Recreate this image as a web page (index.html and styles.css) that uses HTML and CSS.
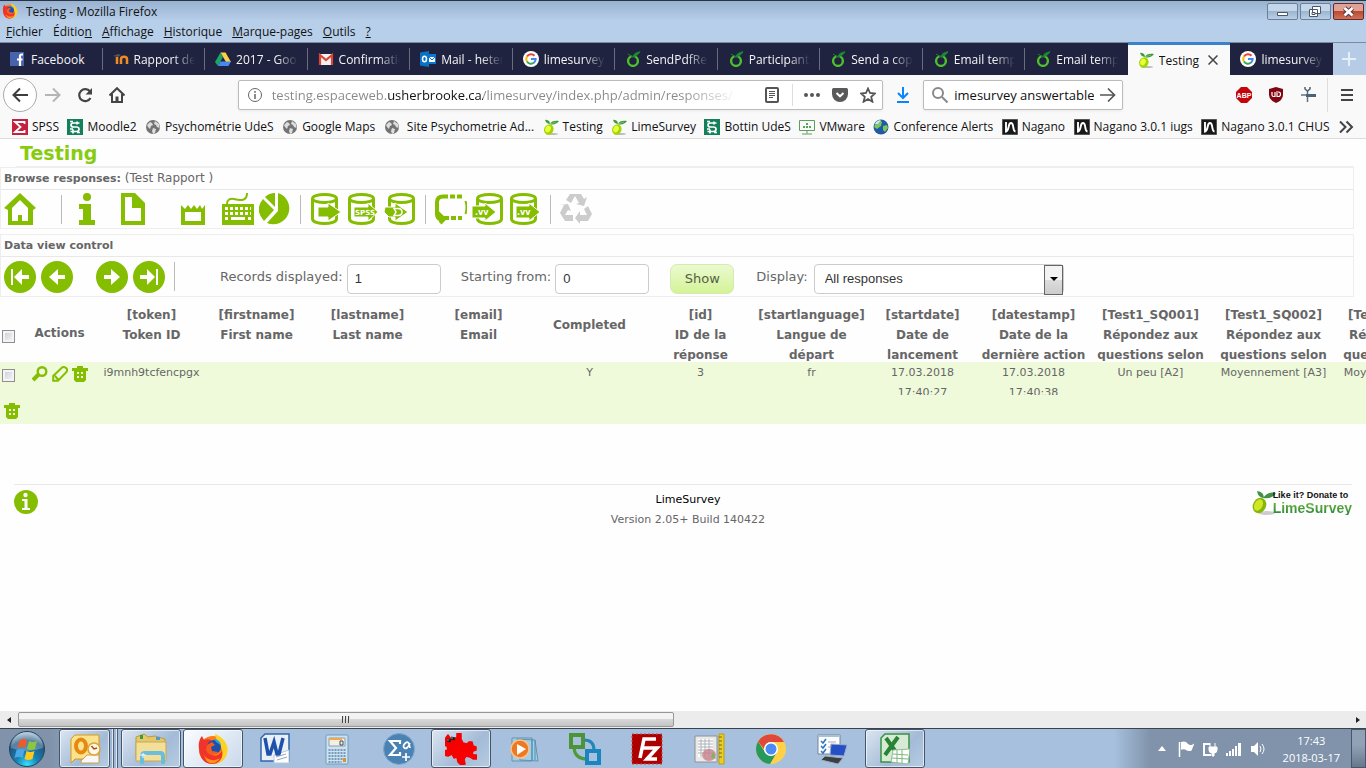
FILE: index.html
```html
<!DOCTYPE html>
<html lang="fr">
<head>
    <meta charset="UTF-8">
    <meta name="viewport" content="width=device-width, initial-scale=1.0">
    <title>Testing - Mozilla Firefox</title>
    <link rel="stylesheet" href="styles.css">
</head>
<body>
    <!-- Shared icons -->
    <svg class="defs" aria-hidden="true">
        <symbol id="firefox" viewBox="0 0 32 32">
            <circle cx="16" cy="17" r="14" fill="#ff7a18"/>
            <path d="M18 1c5 2 11 6 12.500 14 1 9-6 16-14.500 16 7-3 10-8 9-14-.5-5-6-8-7-16z" fill="#ffd21f"/>
            <path d="M2 16C1 10 3 5 5 3l2 4c3-1 6-1 8 1l-4 4c-1 4 0 8 4 10 5 2 9-1 10-5 2 8-3 14-10 14C8 31 3 26 2 16z" fill="#f0342c"/>
            <path d="M7 22c3 5 10 7 16 3-2 4-6 6-10 5-3-1-5-4-6-8z" fill="#ff9416"/>
            <circle cx="17" cy="14" r="7" fill="#1f4fae"/>
            <path d="M10 12l5-3 3 3-4 2 1 4 6 1c-2 4-10 4-12-2z" fill="#f65b1e"/>
            <path d="M17 6c4 0 7 3 7 7-2-3-5-3-7-7z" fill="#28a3e0"/>
        </symbol>
        <symbol id="google" viewBox="0 0 16 16">
            <circle cx="8" cy="8" r="8" fill="#fff"/>
            <g fill="none" stroke-width="2">
                <path d="M11.500 4.700A4.700 4.700 0 0 0 4 5.600" stroke="#ea4335"/>
                <path d="M4 5.500a4.700 4.700 0 0 0 0 5" stroke="#fbbc05"/>
                <path d="M4 10.500a4.700 4.700 0 0 0 7 1.100" stroke="#34a853"/>
                <path d="M8 8h4.700a4.700 4.700 0 0 1-1.700 3.700" stroke="#4285f4"/>
            </g>
        </symbol>
        <symbol id="limeRing" viewBox="0 0 16 16">
            <circle cx="8" cy="10" r="4.900" fill="none" stroke="#4fc02c" stroke-width="2.400"/>
            <path d="M6.500 5h3" stroke="#20233f" stroke-width="3"/>
            <path d="M3 3l4 2.500M7.500 6C8.500 3 11 1.500 15 .8 13.500 3.500 10.500 5.500 7.500 6z" fill="#1c8a33" stroke="#1c8a33"/>
        </symbol>
        <symbol id="lime" viewBox="0 0 16 16">
            <ellipse cx="9" cy="15" rx="6" ry="1" fill="#bbb"/>
            <ellipse cx="5.800" cy="10.500" rx="4.600" ry="5.300" transform="rotate(28 5.800 10.500)" fill="#a2d600"/>
            <ellipse cx="5" cy="10" rx="2.600" ry="3.500" transform="rotate(28 5 10)" fill="#eaff3c"/>
            <path d="M7 5C8 2 12 1 16 2c-2 3-6 4.500-9 3zM7 5C4 5 2.500 3 2 .8 5 .8 7 2 7 5z" fill="#3f9b3a"/>
            <path d="M7 5l6-2" stroke="#a5dc91" stroke-width=".5"/>
        </symbol>
        <symbol id="globe" viewBox="0 0 16 16">
            <circle cx="8" cy="8" r="7" fill="#737373"/>
            <path d="M2 6l3-3 2 1 1 2-2 1-1 3-2-2zM10 2l4 3 .5 4-2.500-1-1-2-2-1zM8 9l3 1-1 4-2 1-1-3z" fill="#ddd"/>
        </symbol>
        <symbol id="udes" viewBox="0 0 16 16">
            <path d="M0 0h16v16H0z" fill="#14805b"/>
            <path d="M12.500 4H6.500Q4 4 4 6t2.500 2h3Q12 8 12 10.200T9.500 12.500H3.500M3 2.500h3M10 2.500v3M6 10.500v4M3 10h3M10 13.500h3" fill="none" stroke="#fff" stroke-width="1.700"/>
        </symbol>
        <symbol id="nagano" viewBox="0 0 16 16">
            <path d="M.5.5h15v15H.5z" fill="#191919" stroke="#555"/>
            <path d="M4 3v9.500C8 11 5.500 4 9 4s1 8 4.500 8.500" fill="none" stroke="#fff" stroke-width="1.900"/>
        </symbol>
        <symbol id="cylinder" viewBox="0 0 32 32">
            <path d="M2.500 6v20c0 6 24 6 24 0V6" fill="none" stroke="#85bd00" stroke-width="3"/>
            <ellipse cx="14.500" cy="5.500" rx="12" ry="4" fill="none" stroke="#85bd00" stroke-width="3"/>
        </symbol>
        <symbol id="trash" viewBox="0 0 16 16">
            <path d="M0 2h5V0h6v2h5v3h-2v9l-2 2H4l-2-2V5H0z" fill="#85bd00"/>
            <path d="M5 6h2v2H5zM9 6h2v2H9zM5 10h2v2H5zM9 10h2v2H9z" fill="#effadb"/>
        </symbol>
        <symbol id="arrow" viewBox="0 0 32 32">
            <circle cx="16" cy="16" r="16" fill="#85bd00"/>
            <path d="M24 14v4h-7v6l-9-8 9-8v6z" fill="#fff"/>
        </symbol>
        <symbol id="arrowEnd" viewBox="0 0 32 32">
            <circle cx="16" cy="16" r="16" fill="#85bd00"/>
            <path d="M25 14v4h-7v6l-8-8 8-8v6zM7 8h2v16H7z" fill="#fff"/>
        </symbol>
    </svg>

    <header class="chrome">
        <div class="titlebar">
            <svg class="i16"><use href="#firefox"/></svg>
            <span class="window-title">Testing - Mozilla Firefox</span>
            <div class="window-buttons">
                <button aria-label="Réduire"><svg viewBox="0 0 31 17"><path d="M10.500 9.500h10v3h-10z" fill="#fff" stroke="#4b5768"/></svg></button>
                <button aria-label="Restaurer"><svg viewBox="0 0 31 17"><g fill="#fff" stroke="#4b5768"><path d="M12.500 3.500h8v7h-8zM9.500 6.500h8v7h-8z"/><path d="M12 9.500h3v2h-3z"/></g></svg></button>
                <button class="close" aria-label="Fermer"><svg viewBox="0 0 31 17"><path d="M11.500 5l8 7.500M19.500 5l-8 7.500" stroke="#55303a" stroke-width="4.500"/><path d="M11.500 5l8 7.500M19.500 5l-8 7.500" stroke="#fff" stroke-width="2.800"/></svg></button>
            </div>
        </div>
        <nav class="menubar">
            <a href="#"><u>F</u>ichier</a>
            <a href="#">Éditio<u>n</u></a>
            <a href="#"><u>A</u>ffichage</a>
            <a href="#"><u>H</u>istorique</a>
            <a href="#"><u>M</u>arque-pages</a>
            <a href="#"><u>O</u>utils</a>
            <a href="#"><u>?</u></a>
        </nav>
        <div class="tabs">
            <a class="tab" href="#"><svg class="i16" viewBox="0 0 16 16"><path d="M0 1h14v14H0z" fill="#4763ab"/><path d="M13 3.500h-1.500Q10 3.500 10 5.500V15M7 8.500h5.500" fill="none" stroke="#fff" stroke-width="2.200"/></svg><span>Facebook</span></a>
            <a class="tab" href="#"><svg class="i16" viewBox="0 0 16 16"><path d="M4 13V6M8 13V8c0-3 6-3 6 0v5" fill="none" stroke="#f08a24" stroke-width="2.500"/><path d="M0 5l5-2 3 1-3 2z" fill="#555"/></svg><span>Rapport de</span></a>
            <a class="tab" href="#"><svg class="i16" viewBox="0 0 16 16"><path d="M5.500 1.500h5L16 11h-5z" fill="#ffcf48"/><path d="M5.500 1.500L8 6l-5 9-3-4z" fill="#1da462"/><path d="M5.500 10.500H16L13.500 15H3z" fill="#4688f4"/></svg><span>2017 - Goog</span></a>
            <a class="tab" href="#"><svg class="i16" viewBox="0 0 16 16"><path d="M1 3h14v11H1z" fill="#f1f1f1"/><path d="M2 14V4l6 5 6-5v10" fill="none" stroke="#db4437" stroke-width="2.200"/></svg><span>Confirmatio</span></a>
            <a class="tab" href="#"><svg class="i16" viewBox="0 0 16 16"><path d="M8 3h8v10H8z" fill="#0a78d4"/><path d="M9 6h6v5H9z" fill="#fff"/><path d="M9 6l3 3 3-3" fill="none" stroke="#0a78d4"/><path d="M0 1.500L9 0v16l-9-1.500z" fill="#0872c6"/><ellipse cx="4.500" cy="8" rx="2" ry="2.800" fill="none" stroke="#fff" stroke-width="1.500"/></svg><span>Mail - heter</span></a>
            <a class="tab" href="#"><svg class="i16"><use href="#google"/></svg><span>limesurvey</span></a>
            <a class="tab" href="#"><svg class="i16"><use href="#limeRing"/></svg><span>SendPdfRep</span></a>
            <a class="tab" href="#"><svg class="i16"><use href="#limeRing"/></svg><span>Participant</span></a>
            <a class="tab" href="#"><svg class="i16"><use href="#limeRing"/></svg><span>Send a copy</span></a>
            <a class="tab" href="#"><svg class="i16"><use href="#limeRing"/></svg><span>Email temp</span></a>
            <a class="tab" href="#"><svg class="i16"><use href="#limeRing"/></svg><span>Email temp</span></a>
            <a class="tab active" href="#"><svg class="i16"><use href="#lime"/></svg><span>Testing</span><svg class="tab-close" viewBox="0 0 10 10"><path d="M.5.5l9 9M9.500.5l-9 9" stroke="#444" stroke-width="1.500"/></svg></a>
            <a class="tab" href="#"><svg class="i16"><use href="#google"/></svg><span>limesurvey</span></a>
            <button class="new-tab" aria-label="Nouvel onglet"><svg viewBox="0 0 14 14"><path d="M7 0v14M0 7h14" stroke="#e6eef7" stroke-width="2"/></svg></button>
        </div>
        <div class="navbar">
            <button class="back" aria-label="Reculer"><svg class="i16" viewBox="0 0 16 16"><path d="M16 8H1.500M8 1.500L1.500 8 8 14.500" fill="none" stroke="#3d3d3d" stroke-width="2"/></svg></button>
            <button aria-label="Avancer"><svg class="i16" viewBox="0 0 16 16"><path d="M0 8h14.500M8 1.500L14.500 8 8 14.500" fill="none" stroke="#b5b5b5" stroke-width="2"/></svg></button>
            <button aria-label="Actualiser"><svg class="i16" viewBox="0 0 16 16"><path d="M13 4.500A6 6 0 1 0 13.500 11" fill="none" stroke="#444" stroke-width="2.200"/><path d="M15 1v6.500H8.500z" fill="#444"/></svg></button>
            <button aria-label="Accueil"><svg class="i16" viewBox="0 0 16 16"><path d="M.5 8.500L8 1.200l7.500 7.300M3 7v8h10V7" fill="none" stroke="#444" stroke-width="2"/><path d="M6.500 9.500h3V15h-3z" fill="#444"/></svg></button>
            <div class="spacer"></div>
            <div class="urlbar">
                <svg class="i16" viewBox="0 0 16 16"><circle cx="8" cy="8" r="6.500" fill="none" stroke="#666"/><path d="M8 7v5M8 4v1.700" stroke="#666" stroke-width="1.500"/></svg>
                <input class="url" type="text" aria-label="Adresse" value="testing.espaceweb.usherbrooke.ca/limesurvey/index.php/admin/responses/">
                <button aria-label="Mode lecture"><svg class="i16" viewBox="0 0 16 16"><rect x="2" y="1" width="12" height="14" rx="1" fill="none" stroke="#555" stroke-width="2"/><path d="M5 4.500h6M5 6.500h6M5 8.500h6M5 10.500h4" stroke="#555"/></svg></button>
                <i class="rule"></i>
                <button aria-label="Actions"><svg class="i16" viewBox="0 0 16 16"><g fill="#555"><circle cx="2" cy="8" r="2"/><circle cx="8" cy="8" r="2"/><circle cx="14" cy="8" r="2"/></g></svg></button>
                <button aria-label="Pocket"><svg class="i16" viewBox="0 0 16 16"><path d="M1.500 1h13Q16 1 16 3v4a8 8 0 0 1-16 0V3Q0 1 1.500 1z" fill="#5a5a5a"/><path d="M4.500 6L8 9.300 11.500 6" fill="none" stroke="#fff" stroke-width="2"/></svg></button>
                <button aria-label="Marquer cette page"><svg class="i16" viewBox="0 0 16 16"><path d="M8 1.500l2 4.500 5 .5-3.800 3.300 1.200 4.900L8 12l-4.400 2.700 1.200-4.900L1 6.500 6 6z" fill="none" stroke="#555" stroke-width="1.800"/></svg></button>
            </div>
            <button aria-label="Téléchargements"><svg class="i16" viewBox="0 0 16 16"><path d="M8 0v10M3 6l5 5 5-5M2 15h12" fill="none" stroke="#0a84ff" stroke-width="2"/></svg></button>
            <div class="searchbar">
                <svg class="i16" viewBox="0 0 16 16"><circle cx="6" cy="6" r="5" fill="none" stroke="#888" stroke-width="2"/><path d="M10 10l5.500 5.500" stroke="#888" stroke-width="2"/></svg>
                <input type="text" aria-label="Recherche" value="imesurvey answertable">
                <button aria-label="Rechercher"><svg class="i16" viewBox="0 0 16 16"><path d="M0 8h14.500M8 1.500L14.500 8 8 14.500" fill="none" stroke="#555" stroke-width="1.700"/></svg></button>
            </div>
            <div class="spacer"></div>
            <button aria-label="Adblock Plus"><svg class="i16" viewBox="0 0 16 16"><path d="M5 0h6l5 5v6l-5 5H5l-5-5V5z" fill="#c4060c"/><text x="8" y="10.500" class="abp">ABP</text></svg></button>
            <button aria-label="uBlock"><svg class="i16" viewBox="0 0 16 16"><path d="M8 0l7 2v6q0 5-7 8Q1 13 1 8V2z" fill="#800610"/><path d="M4 5v3q0 1.500 1.500 1.500H7V5M8 5h2.500q2 0 2 2.200t-2 2.300H9V6" fill="none" stroke="#fff" stroke-width="1.200"/></svg></button>
            <button aria-label="Extension"><svg class="i16" viewBox="0 0 16 16"><path d="M7.500 4v11M1 8h5" stroke="#5b7385" stroke-width="1.500"/><path d="M6 8.500h10" stroke="#4b6375" stroke-width="3"/><path d="M5 0v2l2.500 2L10 2V0" fill="none" stroke="#4b6375" stroke-width="1.500"/></svg></button>
            <i class="rule"></i>
            <button aria-label="Menu"><svg class="i16" viewBox="0 0 16 16"><path d="M2 3h12M2 8h12M2 13h12" stroke="#444" stroke-width="2"/></svg></button>
        </div>
        <nav class="bookmarks">
            <a href="#"><svg class="i16" viewBox="0 0 16 16"><path d="M0 0h16v16H0z" fill="#c5203e"/><path d="M12.500 5V3H3l5.500 5L3 13h9.500v-2" fill="none" stroke="#fff" stroke-width="1.800"/></svg>SPSS</a>
            <a href="#"><svg class="i16"><use href="#udes"/></svg>Moodle2</a>
            <a href="#"><svg class="i16"><use href="#globe"/></svg>Psychométrie UdeS</a>
            <a href="#"><svg class="i16"><use href="#globe"/></svg>Google Maps</a>
            <a href="#"><svg class="i16"><use href="#globe"/></svg>&nbsp;Site Psychometrie Ad...</a>
            <a href="#"><svg class="i16"><use href="#lime"/></svg>Testing</a>
            <a href="#"><svg class="i16"><use href="#lime"/></svg>LimeSurvey</a>
            <a href="#"><svg class="i16"><use href="#udes"/></svg>Bottin UdeS</a>
            <a href="#"><svg class="i16" viewBox="0 0 16 16"><path d="M.5 1.500h15v10H.5zM8 11.500v3M3 15h10" fill="none" stroke="#5aa05a"/><path d="M7 4h2v2H7zM4 7h2v2H4zM7 7h2v2H7zM10 7h2v2h-2z" fill="#5aa05a"/></svg>VMware</a>
            <a href="#"><svg class="i16" viewBox="0 0 16 16"><circle cx="8" cy="8" r="7.500" fill="#2159a8"/><path d="M3 3q4-3 6 0L8 7l-4 3-3-2zM10 7l4-1 1 3-3 4-2-2z" fill="#7ec657"/><path d="M2 5q2-4 6-4l-3 4z" fill="#cbe9f5"/></svg>Conference Alerts</a>
            <a href="#"><svg class="i16"><use href="#nagano"/></svg>Nagano</a>
            <a href="#"><svg class="i16"><use href="#nagano"/></svg>Nagano 3.0.1 iugs</a>
            <a href="#"><svg class="i16"><use href="#nagano"/></svg>Nagano 3.0.1 CHUS</a>
            <button aria-label="Plus de marque-pages"><svg class="i16" viewBox="0 0 16 16"><path d="M2 2.500L7.500 8 2 13.500M8.500 2.500L14 8l-5.500 5.500" fill="none" stroke="#444" stroke-width="2"/></svg></button>
        </nav>
    </header>

    <main class="page">
        <h1>Testing</h1>
        <section class="panel">
            <div class="panel-title"><strong>Browse responses:</strong> (Test Rapport )</div>
            <div class="toolbar">
                <button aria-label="Home"><svg viewBox="0 0 32 32"><path d="M16 0l16 15-3 2v15H4V17l-4-2zM16 7l-8 8v13h6v-6h4v6h6V15z" fill="#85bd00" fill-rule="evenodd"/></svg></button>
                <i class="sep far"></i>
                <button class="info" aria-label="Summary"><svg viewBox="0 0 32 32"><circle cx="16" cy="4" r="4" fill="#85bd00"/><path d="M8 11h12v16h4v5H8v-5h4V16H8z" fill="#85bd00"/></svg></button>
                <button class="doc" aria-label="Display responses"><svg viewBox="0 0 32 32"><path d="M4 0h14l10 10v22H4zM8 4v24h16V15h-9V4z" fill="#85bd00" fill-rule="evenodd"/></svg></button>
                <button class="last" aria-label="Last responses"><svg viewBox="0 0 32 32"><path d="M4 32V12l4 4 3-4 3 4 3-4 3 4 3-4 2 4 3-4v20zM8 19v9h16v-9z" fill="#85bd00" fill-rule="evenodd"/></svg></button>
                <button aria-label="Data entry"><svg viewBox="0 0 32 32"><path d="M0 11h32v21H0z" fill="#85bd00"/><path d="M5 11Q5 5 12 6c7 2 13 2 13-6" fill="none" stroke="#85bd00" stroke-width="2"/><path d="M3 15.500h26M3 20.500h26" stroke="#fff" stroke-width="3" stroke-dasharray="3 2"/><path d="M3 25.500h3M9 25.500h14M26 25.500h3" stroke="#fff" stroke-width="3"/></svg></button>
                <button aria-label="Statistics"><svg viewBox="0 0 32 32"><path d="M19 0A16 16 0 1 1 8 30L19 18zM16 0v14L6 4Q10 0 16 0zM4 6l11 11L5 28Q-5 17 4 6z" fill="#85bd00"/></svg></button>
                <i class="sep"></i>
                <button aria-label="Export results"><svg viewBox="0 0 32 32"><use href="#cylinder"/><path d="M8 14h10v-4l13 9-13 9v-4H8z" fill="#85bd00" stroke="#fff"/></svg></button>
                <button aria-label="Export to SPSS"><svg viewBox="0 0 32 32"><use href="#cylinder"/><path d="M7 14h14v-4l10 9-10 9v-4H7z" fill="#85bd00" stroke="#fff"/><text x="8" y="22" class="db-text spss">SPSS</text></svg></button>
                <button aria-label="Import responses"><svg viewBox="0 0 32 32"><svg x="3" width="32" height="32"><use href="#cylinder"/></svg><path d="M1 14h10v-4l13 9-13 9v-4H5l-5-5z" fill="#85bd00" stroke="#fff"/><path d="M10 15.500h4q4 0 4 3.500t-4 3.500h-4l2-3.500z" fill="none" stroke="#fff" stroke-width="1.500"/></svg></button>
                <i class="sep"></i>
                <button aria-label="Saved responses"><svg viewBox="0 0 32 32"><path d="M13 3.500H8q-6 0-6 6V21q0 4 3 5v-4l4 4-4 4" fill="none" stroke="#85bd00" stroke-width="4"/><path d="M15 3.500h12M9 25h18" stroke="#85bd00" stroke-width="4" stroke-dasharray="5 2"/><path d="M30.500 8q2 7 0 13" fill="none" stroke="#85bd00" stroke-width="2"/></svg></button>
                <button aria-label="Import VV"><svg viewBox="0 0 32 32"><svg x="3" width="32" height="32"><use href="#cylinder"/></svg><path d="M0 13h13v-3l11 9-11 9v-3H0z" fill="#85bd00" stroke="#fff"/><text x="3" y="22" class="db-text">.vv</text></svg></button>
                <button aria-label="Export VV"><svg viewBox="0 0 32 32"><use href="#cylinder"/><path d="M7 13h13v-3l11 9-11 9v-3H7z" fill="#85bd00" stroke="#fff"/><text x="8" y="22" class="db-text">.vv</text></svg></button>
                <i class="sep"></i>
                <button aria-label="Iterate survey"><svg viewBox="0 0 32 32"><g fill="#ccc"><path d="M10 1h11l3 5 3-2-3 9-8-2 3-1-4-7-4 7-5-3zM28 13l4 8-4 7h-8v3l-5-6 5-7v4h7l-3-6zM4 12H0l8-1 3 7-3-1-3 5h8v6H5l-5-8z"/></g></svg></button>
            </div>
        </section>
        <section class="panel">
            <div class="panel-title"><strong>Data view control</strong></div>
            <form class="toolbar controls" onsubmit="return false">
                <button type="button" aria-label="First"><svg><use href="#arrowEnd"/></svg></button>
                <button type="button" class="prev" aria-label="Previous"><svg><use href="#arrow"/></svg></button>
                <button type="button" class="flip" aria-label="Next"><svg><use href="#arrow"/></svg></button>
                <button type="button" class="flip" aria-label="Last"><svg><use href="#arrowEnd"/></svg></button>
                <i class="sep"></i>
                <div class="field first"><label for="limit">Records displayed:</label><input type="text" id="limit" value="1"></div>
                <div class="field"><label for="start">Starting from:</label><input type="text" id="start" value="0"></div>
                <button class="show" type="submit">Show</button>
                <div class="field display"><label for="filter">Display:</label>
                    <span class="select"><select id="filter"><option>All responses</option><option>Completed responses only</option><option>Incomplete responses only</option></select></span>
                </div>
            </form>
        </section>

        <div class="grid">
            <table>
                <colgroup>
                    <col class="c-check"><col class="c-actions"><col class="c-token">
                    <col span="8" class="c-data"><col span="3" class="c-question">
                </colgroup>
                <thead>
                    <tr>
                        <th><input type="checkbox" aria-label="Select all"></th>
                        <th class="middle">Actions</th>
                        <th><div>[token]<br>Token ID</div></th>
                        <th><div>[firstname]<br>First name</div></th>
                        <th><div>[lastname]<br>Last name</div></th>
                        <th><div>[email]<br>Email</div></th>
                        <th><div class="single">Completed</div></th>
                        <th><div>[id]<br>ID de la<br>réponse</div></th>
                        <th><div>[startlanguage]<br>Langue de<br>départ</div></th>
                        <th><div>[startdate]<br>Date de<br>lancement</div></th>
                        <th><div>[datestamp]<br>Date de la<br>dernière action</div></th>
                        <th><div>[Test1_SQ001]<br>Répondez aux<br>questions selon</div></th>
                        <th><div>[Test1_SQ002]<br>Répondez aux<br>questions selon</div></th>
                        <th><div>[Test1_SQ003]<br>Répondez aux<br>questions selon</div></th>
                    </tr>
                </thead>
                <tbody>
                    <tr>
                        <td><input type="checkbox" aria-label="Select response 3"></td>
                        <td>
                            <div class="row-actions">
                                <button aria-label="View"><svg class="i16" viewBox="0 0 16 16"><circle cx="10" cy="5.500" r="4.300" fill="none" stroke="#85bd00" stroke-width="2.400"/><path d="M7 8l-6 6" stroke="#85bd00" stroke-width="4"/></svg></button>
                                <button aria-label="Edit"><svg class="i16" viewBox="0 0 16 16"><path d="M1.200 14.800V10L10 1.500q2-1 4 .5t.5 4L6 14.800zM3 10l3.500 4" fill="none" stroke="#85bd00" stroke-width="2"/></svg></button>
                                <button aria-label="Delete"><svg class="i16"><use href="#trash"/></svg></button>
                            </div>
                        </td>
                        <td><div>i9mnh9tcfencpgx</div></td>
                        <td></td>
                        <td></td>
                        <td></td>
                        <td><div>Y</div></td>
                        <td><div>3</div></td>
                        <td><div>fr</div></td>
                        <td><div>17.03.2018<br>17:40:27</div></td>
                        <td><div>17.03.2018<br>17:40:38</div></td>
                        <td><div>Un peu [A2]</div></td>
                        <td><div>Moyennement [A3]</div></td>
                        <td><div>Moyennement [A3]</div></td>
                    </tr>
                </tbody>
            </table>
            <div class="grid-footer"><button aria-label="Delete selected"><svg class="i16"><use href="#trash"/></svg></button></div>
        </div>

        <footer class="footer">
            <svg class="about" viewBox="0 0 24 24"><circle cx="12" cy="12" r="12" fill="#85bd00"/><circle cx="11.500" cy="5" r="2.200" fill="#fff"/><path d="M8 9h5.500v9H16v2H8v-2h2.500v-7H8z" fill="#fff"/></svg>
            <div class="version"><a href="#">LimeSurvey</a><br>Version 2.05+ Build 140422</div>
            <a class="donate" href="#">
                <svg viewBox="0 0 24 26"><ellipse cx="15" cy="23" rx="8" ry="2" fill="#ccc"/><ellipse cx="7.500" cy="15.500" rx="6.500" ry="8" transform="rotate(28 7.500 15.500)" fill="#86b70c"/><ellipse cx="6.500" cy="15" rx="4" ry="6" transform="rotate(28 6.500 15)" fill="#d2e624"/><path d="M11 8Q16 1 24 3q-3 6-13 5zM12 8Q6 8 5 1q7 1 7 7z" fill="#3f9148"/></svg>
                <span><b>Like it? Donate to</b><strong>LimeSurvey</strong></span>
            </a>
        </footer>
    </main>

    <div class="hscroll">
        <button aria-label="Gauche"><svg viewBox="0 0 4 8"><path d="M4 1v6L0 4z" fill="#222"/></svg></button>
        <div class="track"><div class="thumb"><i></i><i></i><i></i></div></div>
        <button aria-label="Droite"><svg viewBox="0 0 4 8"><path d="M0 1v6l4-3z" fill="#222"/></svg></button>
    </div>

    <div class="taskbar">
        <button class="orb" aria-label="Démarrer">
            <svg viewBox="0 0 38 38">
                <defs>
                    <radialGradient id="orbFill" cx=".5" cy=".95" r=".9"><stop offset="0" stop-color="#39e1ff"/><stop offset=".35" stop-color="#1583b5"/><stop offset=".75" stop-color="#21557f"/><stop offset="1" stop-color="#9bb9cd"/></radialGradient>
                </defs>
                <circle cx="19" cy="19" r="17.500" fill="url(#orbFill)" stroke="#26435c"/>
                <path d="M3 18A16 16 0 0 1 35 18Q19 24 3 18z" fill="#fff" opacity=".25"/>
                <path d="M12 10q4-2 7 0l-2 8q-4-2-8 0z" fill="#f0592a"/>
                <path d="M21 11q4 2 8 0l-2 8q-4 2-8 0z" fill="#8cc63f"/>
                <path d="M8.500 20q4-2 8 0l-2 8q-4-2-8 0z" fill="#4aa7e8"/>
                <path d="M18.500 21q4 2 8 0l-2 8q-4 2-8 0z" fill="#ffc81f"/>
            </svg>
        </button>
        <button class="task open outlook" aria-label="Outlook"><svg viewBox="0 0 32 32"><path d="M6 2h24v24H6L2 30V6z" fill="#fbe28c" stroke="#d59a1f"/><path d="M12 28l6-6h12v8H12z" fill="#f7f7f7" stroke="#c9a24a"/><ellipse cx="12" cy="13" rx="5" ry="6.500" fill="none" stroke="#e48a12" stroke-width="4"/><circle cx="25" cy="16" r="6" fill="#fff8e5" stroke="#dda23b" stroke-width="1.500"/><path d="M22.500 13l2.500 3 3-1" fill="none" stroke="#a54a1c" stroke-width="1.500"/></svg></button>
        <div class="stack"><i></i><i></i></div>
        <button class="task open" aria-label="Explorateur"><svg viewBox="0 0 32 32"><path d="M1 4l8-3 4 3 7-1 10 3v20H1z" fill="#e6c769" stroke="#ba9b45"/><path d="M5 2h3v4H5z" fill="#389b3e"/><path d="M21 4h4v3h-4z" fill="#4e9dd1"/><path d="M1 9h30v19H1z" fill="#f4df98" stroke="#c5a957"/><path d="M7 31v-8q0-3 3-3h15q3 0 3 3v8" fill="none" stroke="#69bedb" stroke-width="4"/><path d="M8 20v5M5 22h6" stroke="#fff"/></svg></button>
        <button class="task open current" aria-label="Firefox"><svg><use href="#firefox"/></svg></button>
        <button class="task" aria-label="Word"><svg viewBox="0 0 32 32"><path d="M6 1h24v27H2V5z" fill="#e9f0f8" stroke="#3465a9" stroke-width="1.500"/><path d="M15 22l15-5v13H15z" fill="#fff" stroke="#b7c7da"/><path d="M6 5l3 16h2l4-12 3 12h2l4-16" fill="none" stroke="#1e52aa" stroke-width="3.500"/><path d="M17 24l10-3M18 27l10-3" stroke="#94a7c5"/></svg></button>
        <button class="task" aria-label="Calculatrice"><svg viewBox="0 0 32 32"><rect x="5" y="2" width="22" height="29" rx="1" fill="#cde2f2" stroke="#719cbd"/><path d="M8 5h16v8H8z" fill="#f3efe4" stroke="#8a9eaa"/><path d="M8 5h13v2H8z" fill="#f3a847"/><path d="M19 8h3v4h-3z" fill="none" stroke="#434d57"/><path d="M7.500 17h17M7.500 20h17M7.500 23h17M7.500 26h17M7.500 29h13" stroke="#779cb9" stroke-width="2" stroke-dasharray="2 1"/><path d="M22 25h3v4h-3z" fill="#d8903d"/></svg></button>
        <button class="task" aria-label="SPSS"><svg viewBox="0 0 32 32"><circle cx="16" cy="16" r="15.500" fill="#4b82b4" stroke="#7ba8ce"/><path d="M17 11V8H7l6 7-6 7h10v-3" fill="none" stroke="#fff" stroke-width="2.200"/><path d="M27 10q-3 7-5.500 5t1-5 4.500 5M23 20v8M19 24h8" fill="none" stroke="#fff" stroke-width="1.700"/></svg></button>
        <button class="task open" aria-label="IrfanView"><svg viewBox="0 0 32 32"><path d="M0 6l3-4 2 3 4 1 3-2V0h4v6l2 4 4 1 2-2h3l1 4 3 1v3l-3 1-1 3 2 1 3 0v4h-4l-3-2-4-1-2 3 1 5-4 1-3-3-1-5-3 1-2-4-4 2-4-1v-4l4-1-1-4-4-1z" fill="#f70000" stroke="#f70000" stroke-width="1.500" stroke-linejoin="round"/><path d="M2 7l4 1M6 5l4 1" stroke="#222" stroke-width="3"/><path d="M2.500 7h1M6.500 5h1" stroke="#fff"/></svg></button>
        <button class="task" aria-label="Lecteur multimédia"><svg viewBox="0 0 32 32"><path d="M10 6l18 1 3 21-18-1zM5 5h20v23H5z" fill="#a4cde6" stroke="#6493ae"/><path d="M25 6v22M28 7v20" stroke="#4d8eb5"/><circle cx="13" cy="16" r="9" fill="#ed7920" stroke="#fac38d" stroke-width="1.500"/><path d="M10 11l9 5-9 6z" fill="#fff"/></svg></button>
        <button class="task" aria-label="VMware"><svg viewBox="0 0 32 32"><g fill="none" stroke-width="3"><path d="M5 15q1 11 13 11" stroke="#51983d"/><path d="M15 7q10 0 10 10" stroke="#2587b5"/><path d="M2 2h12v12H2z" stroke="#4d9438" stroke-width="4"/><path d="M18 18h12v12H18z" stroke="#1b85c0" stroke-width="4"/></g></svg></button>
        <button class="task" aria-label="FileZilla"><svg viewBox="0 0 32 32"><path d="M1 1h30v30H1z" fill="#ad0000" stroke="#c54c4c" stroke-dasharray="2 2"/><path d="M9 25L13 6h12M11 15h9M17 15h9L16 26h10" fill="none" stroke="#fff" stroke-width="3.600"/></svg></button>
        <button class="task" aria-label="Outils"><svg viewBox="0 0 32 32"><path d="M2 3h22v26H2z" fill="#e9e9e9" stroke="#909090"/><path d="M5 6h15v18H5z" fill="#fff"/><path d="M5 8h15M5 11h15M5 14h15M5 17h15M5 20h15M8 6v18M12 6v18M16 6v18" stroke="#aab2b8"/><ellipse cx="16" cy="22" rx="7" ry="6" fill="#c98088" opacity=".8"/><path d="M18 24l2-5 3 7z" fill="#79b55e"/><path d="M26 1h5v30h-5z" fill="#e9cf25" stroke="#b99d19"/><path d="M26 4h3M26 8h3M26 12h3M26 16h3M26 20h3M26 24h3" stroke="#7b6912"/></svg></button>
        <button class="task" aria-label="Chrome"><svg viewBox="0 0 32 32"><circle cx="16" cy="16" r="15" fill="#fdd14a"/><path d="M3 8.500A15 15 0 0 1 29 9H16q-6 0-7 7z" fill="#e0483a"/><path d="M3 8.500A15 15 0 0 0 15 31l7-12q-6 7-12 0z" fill="#29985b"/><circle cx="16" cy="16" r="7" fill="#fff"/><circle cx="16" cy="16" r="5.500" fill="#4b8bf4"/></svg></button>
        <button class="task" aria-label="Bureau à distance"><svg viewBox="0 0 32 32"><path d="M1 2h22v19H1z" fill="#fafcff" stroke="#778698"/><path d="M1 2h22v2H1z" fill="#aebfd0"/><path d="M4 8l2 2 3-4M4 13l2 2 3-4M4 18l2 2 3-4" fill="none" stroke="#2876ba" stroke-width="1.500"/><path d="M11 9h8M11 14h5" stroke="#aaa"/><path d="M14 11l16 1-3 11-14-1z" fill="#254fc7" stroke="#9cabc9"/><path d="M8 23l18 2-5 6L4 27z" fill="#383f47" stroke="#a4adb4"/></svg></button>
        <button class="task open" aria-label="Excel"><svg viewBox="0 0 32 32"><path d="M6 1h24v28H2V5z" fill="#d7ead4" stroke="#399247" stroke-width="1.500"/><path d="M7 5l12 17M19 4L6 22" stroke="#278435" stroke-width="4"/><path d="M14 17l17-1-2 15-17-2z" fill="#fff" stroke="#92bd91"/><path d="M14 21l15 1M13 25l16 1M18 17v12M23 17v13" stroke="#80b881"/></svg></button>

        <div class="tray">
            <svg class="i16" viewBox="0 0 16 16"><path d="M8 5l4 5H4z" fill="#fff"/></svg>
            <svg class="i16" viewBox="0 0 16 16"><path d="M1.500 1v15M3 2q4-2 6 1 3 3 6 1l-2 5q-3 1-5-1-2-1-5 0" fill="#fff" stroke="#fff" stroke-width="1.500"/></svg>
            <svg class="i16" viewBox="0 0 16 16"><path d="M8 3H2v11h7" fill="none" stroke="#fff" stroke-width="2"/><path d="M7 6h8v3q0 3-3 3v3h-2v-3q-3 0-3-3zM8 2v4M13 2v4" fill="#fff" stroke="#fff"/></svg>
            <svg class="i16" viewBox="0 0 16 16"><path d="M0 12h2v3H0zM3 10h2v5H3zM6 8h2v7H6zM9 5h2v10H9zM12 2h3v13h-3z" fill="#fff"/></svg>
            <svg class="i16" viewBox="0 0 16 16"><path d="M1 5h3l4-4v14l-4-4H1z" fill="#fff"/><path d="M10 5q2 3 0 6M12 3q4 5 0 10" fill="none" stroke="#fff"/></svg>
            <time class="clock">17:43<br>2018-03-17</time>
        </div>
        <button class="show-desktop" aria-label="Afficher le bureau"></button>
    </div>
</body>
</html>
```

FILE: styles.css
```css
* {
    box-sizing: border-box;
}

body {
    margin: 0;
    min-height: 100vh;
    display: flex;
    flex-direction: column;
    overflow: hidden;
    background: #fefefe;
    font-family: "DejaVu Sans", Verdana, sans-serif;
    font-size: 11px;
    color: #666;
}

a {
    color: inherit;
    text-decoration: none;
}

button {
    padding: 0;
    border: 0;
    background: none;
    display: flex;
    align-items: center;
    justify-content: center;
}

svg {
    display: block;
    flex: none;
}

.defs {
    position: absolute;
    width: 0;
    height: 0;
}

.i16 {
    width: 16px;
    height: 16px;
}

/* Browser window */
.chrome {
    font-family: "Open Sans", "Segoe UI", sans-serif;
    font-size: 12px;
    color: #111;
    border-top: 1px solid #2a3342;
    white-space: nowrap;
}

.titlebar {
    height: 20px;
    padding-left: 2px;
    display: flex;
    align-items: center;
    gap: 8px;
    background: linear-gradient(#98b2d1, #b8cfea);
}

.window-title {
    flex: 1;
}

.window-buttons {
    display: flex;
    gap: 2px;
    padding-right: 2px;
}

.window-buttons button {
    width: 31px;
    height: 17px;
    border: 1px solid #6b7f98;
    border-radius: 2px;
    background: linear-gradient(#c3d6ea 50%, #9db6d0 50%, #b8cfe6);
}

.window-buttons svg {
    width: 31px;
    height: 17px;
}

.window-buttons .close {
    border-color: #672a2a;
    background: linear-gradient(#dfa294 50%, #bb4a32 50%, #cf7259);
}

.menubar {
    height: 21px;
    padding: 0 6px;
    display: flex;
    align-items: center;
    gap: 10px;
    background: #b8cfea;
}

.tabs {
    height: 33px;
    display: flex;
    background: #20233f;
    border-top: 1px solid #7c8a9f;
}

.tab {
    flex: 1;
    min-width: 0;
    padding: 0 10px;
    display: flex;
    align-items: center;
    gap: 5px;
    color: #f5f5f8;
    background: linear-gradient(#6a6c80, #6a6c80) right center / 1px 22px no-repeat;
}

.tab span {
    flex: 1;
    overflow: hidden;
    -webkit-mask-image: linear-gradient(90deg, #000 65%, transparent);
    mask-image: linear-gradient(90deg, #000 65%, transparent);
}

.tab:first-child span,
.tab.active span {
    -webkit-mask-image: none;
    mask-image: none;
}

.tab.active {
    margin-top: -1px;
    color: #111;
    background: #f9f9fa;
    border-top: 3px solid #3b82c8;
}

.tab:nth-child(11),
.tab:nth-child(13) {
    background: none;
}

.tab-close {
    width: 10px;
    height: 10px;
    margin-right: 2px;
}

.new-tab {
    width: 33px;
    background: #b5cbe6;
}

.new-tab svg {
    width: 14px;
    height: 14px;
}

.navbar {
    height: 40px;
    padding: 0 11px 0 3px;
    display: flex;
    align-items: center;
    gap: 16px;
    background: #f9f9fa;
}

.back {
    width: 34px;
    height: 34px;
    margin-right: -8px;
    border: 1px solid #aaa;
    border-radius: 50%;
    background: #fff;
}

.spacer {
    flex: 5;
}

.rule {
    width: 1px;
    height: 22px;
    background: #ddd;
}

.navbar > .rule {
    height: 34px;
    margin: 0 -5px;
}

.urlbar,
.searchbar {
    height: 30px;
    display: flex;
    align-items: center;
    border: 1px solid #bbb;
    border-radius: 2px;
    background: #fff;
    box-shadow: 0 1px 3px rgba(0, 0, 0, .06);
}

.urlbar {
    flex: 39;
    padding: 0 6px 0 8px;
    gap: 12px;
    margin-right: -4px;
}

.urlbar input,
.searchbar input {
    flex: 1;
    min-width: 0;
    padding: 0;
    border: 0;
    outline: 0;
    background: none;
    font-family: inherit;
    font-size: 13px;
    color: #111;
}

/* the registered domain is darker than the rest of the address */
.urlbar .url {
    margin-left: -3px;
    margin-right: 20px;
    color: transparent;
    background: linear-gradient(90deg, #888 115px, #111 115px, #111 211px, #888 211px, #888 410px, transparent 466px);
    -webkit-background-clip: text;
    background-clip: text;
}

.urlbar .rule {
    margin: 0 -1px 0 0;
}

.searchbar {
    width: 200px;
    padding: 0 6px 0 8px;
    gap: 6px;
    margin-left: -4px;
}

.abp {
    font: bold 7px "Liberation Sans", sans-serif;
    fill: #fff;
    text-anchor: middle;
}

.bookmarks {
    height: 24px;
    padding: 0 12px;
    display: flex;
    align-items: center;
    justify-content: space-between;
    background: #f9f9fa;
    border-bottom: 1px solid #ddd;
}

.bookmarks a {
    display: flex;
    align-items: center;
    gap: 4px;
}

/* LimeSurvey page */
.page {
    flex: 1;
    overflow: hidden;
}

h1 {
    margin: 0 12px 0 16px;
    padding-left: 4px;
    height: 28px;
    font-size: 19px;
    line-height: 28px;
    color: #8c1;
    border-bottom: 1px solid #eee;
}

.panel {
    margin: 0 12px 5px 0;
    border: 1px solid #eee;
}

.panel-title {
    padding-left: 3px;
    font-size: 12px;
    line-height: 21px;
    border-bottom: 1px solid #e8e8e8;
}

.panel-title strong {
    font-size: 11px;
}

.toolbar {
    height: 38px;
    padding: 0 3px;
    display: flex;
    align-items: center;
    gap: 5px;
}

.toolbar svg {
    width: 32px;
    height: 32px;
}

.sep {
    width: 1px;
    height: 29px;
    margin: 0 4px;
    background: #bbb;
}

.sep.far {
    margin-left: 20px;
}

.toolbar .info {
    margin-right: 9px;
}

.toolbar .doc {
    margin-right: 23px;
}

.toolbar .last {
    margin-right: 8px;
}

.db-text {
    font: bold 8px "DejaVu Sans", sans-serif;
    fill: #fff;
}

.db-text.spss {
    font-size: 7px;
}

.toolbar.controls {
    height: 39px;
    font-size: 13px;
}

.toolbar .prev {
    margin-right: 18px;
}

.flip svg {
    transform: scaleX(-1);
}

.field {
    display: flex;
    align-items: center;
    gap: 4px;
    margin-right: 15px;
}

.field.first {
    margin-left: 36px;
}

.field.display {
    margin-left: 16px;
    gap: 6px;
}

.field input,
.field select {
    height: 30px;
    border: 1px solid #ccc;
    border-radius: 4px;
    background: #fff;
    color: #333;
    font-family: "Liberation Sans", Arial, sans-serif;
    font-size: 13px;
}

.field input,
.select,
.show {
    margin-top: 4px;
}

.field input {
    width: 94px;
    padding: 0 7px;
}

.show {
    width: 64px;
    height: 30px;
    margin-left: 1px;
    margin-right: 1px;
    border: 1px solid #d3ebb2;
    border-radius: 7px;
    background: linear-gradient(#ebfad0, #d4f397);
    color: #566044;
    font-family: inherit;
    font-size: 13px;
}

.select {
    position: relative;
}

.select select {
    display: block;
    width: 250px;
    padding: 0 10px;
    appearance: none;
}

.select::before {
    content: "";
    position: absolute;
    top: 1px;
    right: 1px;
    width: 17px;
    height: 28px;
    border: 1px solid #666;
    background: linear-gradient(#f3f3f3 50%, #ddd 50%, #ccc);
    pointer-events: none;
}

.select::after {
    content: "";
    position: absolute;
    top: 13px;
    right: 6px;
    border: 4px solid transparent;
    border-top-color: #000;
    border-bottom: 0;
    pointer-events: none;
}

/* Response grid */
.grid {
    padding-top: 3px;
    overflow: hidden;
}

table {
    width: 1458px;
    table-layout: fixed;
    border-collapse: collapse;
}

.c-check { width: 17px; }
.c-actions { width: 85px; }
.c-token { width: 99px; }
.c-data { width: 111px; }
.c-question { width: 123px; }

th,
td {
    padding: 0;
    vertical-align: top;
    text-align: center;
    line-height: 20px;
}

th {
    height: 57px;
    font-size: 12px;
}

th div {
    height: 56px;
    overflow: hidden;
    white-space: nowrap;
}

th .single {
    padding-top: 10px;
}

th.middle {
    padding-top: 18px;
}

th:first-child {
    padding-top: 25px;
}

td {
    height: 36px;
    padding-top: 1px;
    background: #effadb;
}

td div {
    height: 32px;
    overflow: hidden;
    white-space: nowrap;
}

.grid input[type="checkbox"] {
    appearance: none;
    display: block;
    width: 13px;
    height: 13px;
    margin: 0 0 0 2px;
    border: 1px solid #8e8f8f;
    background: linear-gradient(135deg, #c6cdd5, #f8f8f8);
    box-shadow: inset 0 0 0 2px #f4f4f4;
}

.grid td input[type="checkbox"] {
    margin-top: 6px;
}

.row-actions {
    display: flex;
    align-items: flex-start;
    justify-content: center;
    gap: 4px;
    padding-top: 3px;
}

.grid-footer {
    padding: 5px 4px;
    background: #effadb;
}

/* Footer */
.footer {
    margin: 60px 14px 0;
    padding-top: 5px;
    display: grid;
    grid-template-columns: 1fr auto 1fr;
    align-items: start;
    border-top: 1px solid #e8e8e8;
}

.about {
    width: 24px;
    height: 24px;
}

.version {
    padding-left: 10px;
    text-align: center;
    line-height: 20px;
}

.version a {
    color: #000;
}

.donate {
    justify-self: end;
    display: flex;
    font-family: "Liberation Sans", Arial, sans-serif;
}

.donate svg {
    width: 24px;
    height: 26px;
    margin-right: -3px;
}

.donate b,
.donate strong {
    display: block;
    white-space: nowrap;
}

.donate b {
    font-size: 9px;
    line-height: 11px;
    color: #111;
}

.donate strong {
    font-size: 14px;
    line-height: 14px;
    color: transparent;
    background: linear-gradient(#72bd3a, #28813b);
    -webkit-background-clip: text;
    background-clip: text;
}

/* Horizontal scrollbar */
.hscroll {
    height: 17px;
    display: flex;
    background: #ececec;
}

.hscroll button {
    width: 17px;
}

.hscroll svg {
    width: 4px;
    height: 8px;
}

.track {
    flex: 1;
    padding: 1px;
}

.thumb {
    width: 49.3%;
    height: 15px;
    display: flex;
    align-items: center;
    justify-content: center;
    gap: 1px;
    border: 1px solid #979797;
    border-radius: 2px;
    background: linear-gradient(#f3f3f3 45%, #d6d6d6 50%, #c4c4c4);
}

.thumb i {
    width: 2px;
    height: 7px;
    border-left: 1px solid #444;
    background: #ddd;
}

/* Taskbar */
.taskbar {
    height: 40px;
    display: flex;
    align-items: stretch;
    border-top: 1px solid #39424f;
    background: linear-gradient(90deg, #8093ab 50px, #a7c0dd 130px);
    color: #fff;
}

.orb {
    width: 53px;
    margin-right: 6px;
}

.orb svg {
    width: 38px;
    height: 38px;
}

.task {
    width: 60px;
    margin-right: 2px;
    border: 1px solid transparent;
    border-radius: 3px;
}

.task svg {
    width: 32px;
    height: 32px;
}

.task.open {
    border-color: #45566b;
    background: linear-gradient(135deg, #dbe5f1, #a3bbd7 60%, #b7cce3);
    box-shadow: inset 0 0 0 1px rgba(255, 255, 255, .6);
}

.task.current {
    background: linear-gradient(135deg, #fbfdff, #c8d8ea);
}

.task.outlook {
    width: 51px;
    margin-right: 0;
}

.stack {
    width: 11px;
    display: flex;
}

.stack i {
    width: 4px;
    border-right: 1px solid #4f6178;
    box-shadow: inset -1px 0 #dce6f2;
}

.tray {
    margin-left: auto;
    padding: 0 11px 0 40px;
    display: flex;
    align-items: center;
    gap: 8px;
    background: linear-gradient(90deg, #a7c0dd, #8093ab 36px);
}

.clock {
    margin-left: 9px;
    text-align: center;
    font-family: "Open Sans", "Segoe UI", sans-serif;
    font-size: 11px;
    line-height: 17px;
}

.show-desktop {
    width: 15px;
    border: 1px solid #47566a;
    background: linear-gradient(#92a2b6 40%, #67788e);
}
```
